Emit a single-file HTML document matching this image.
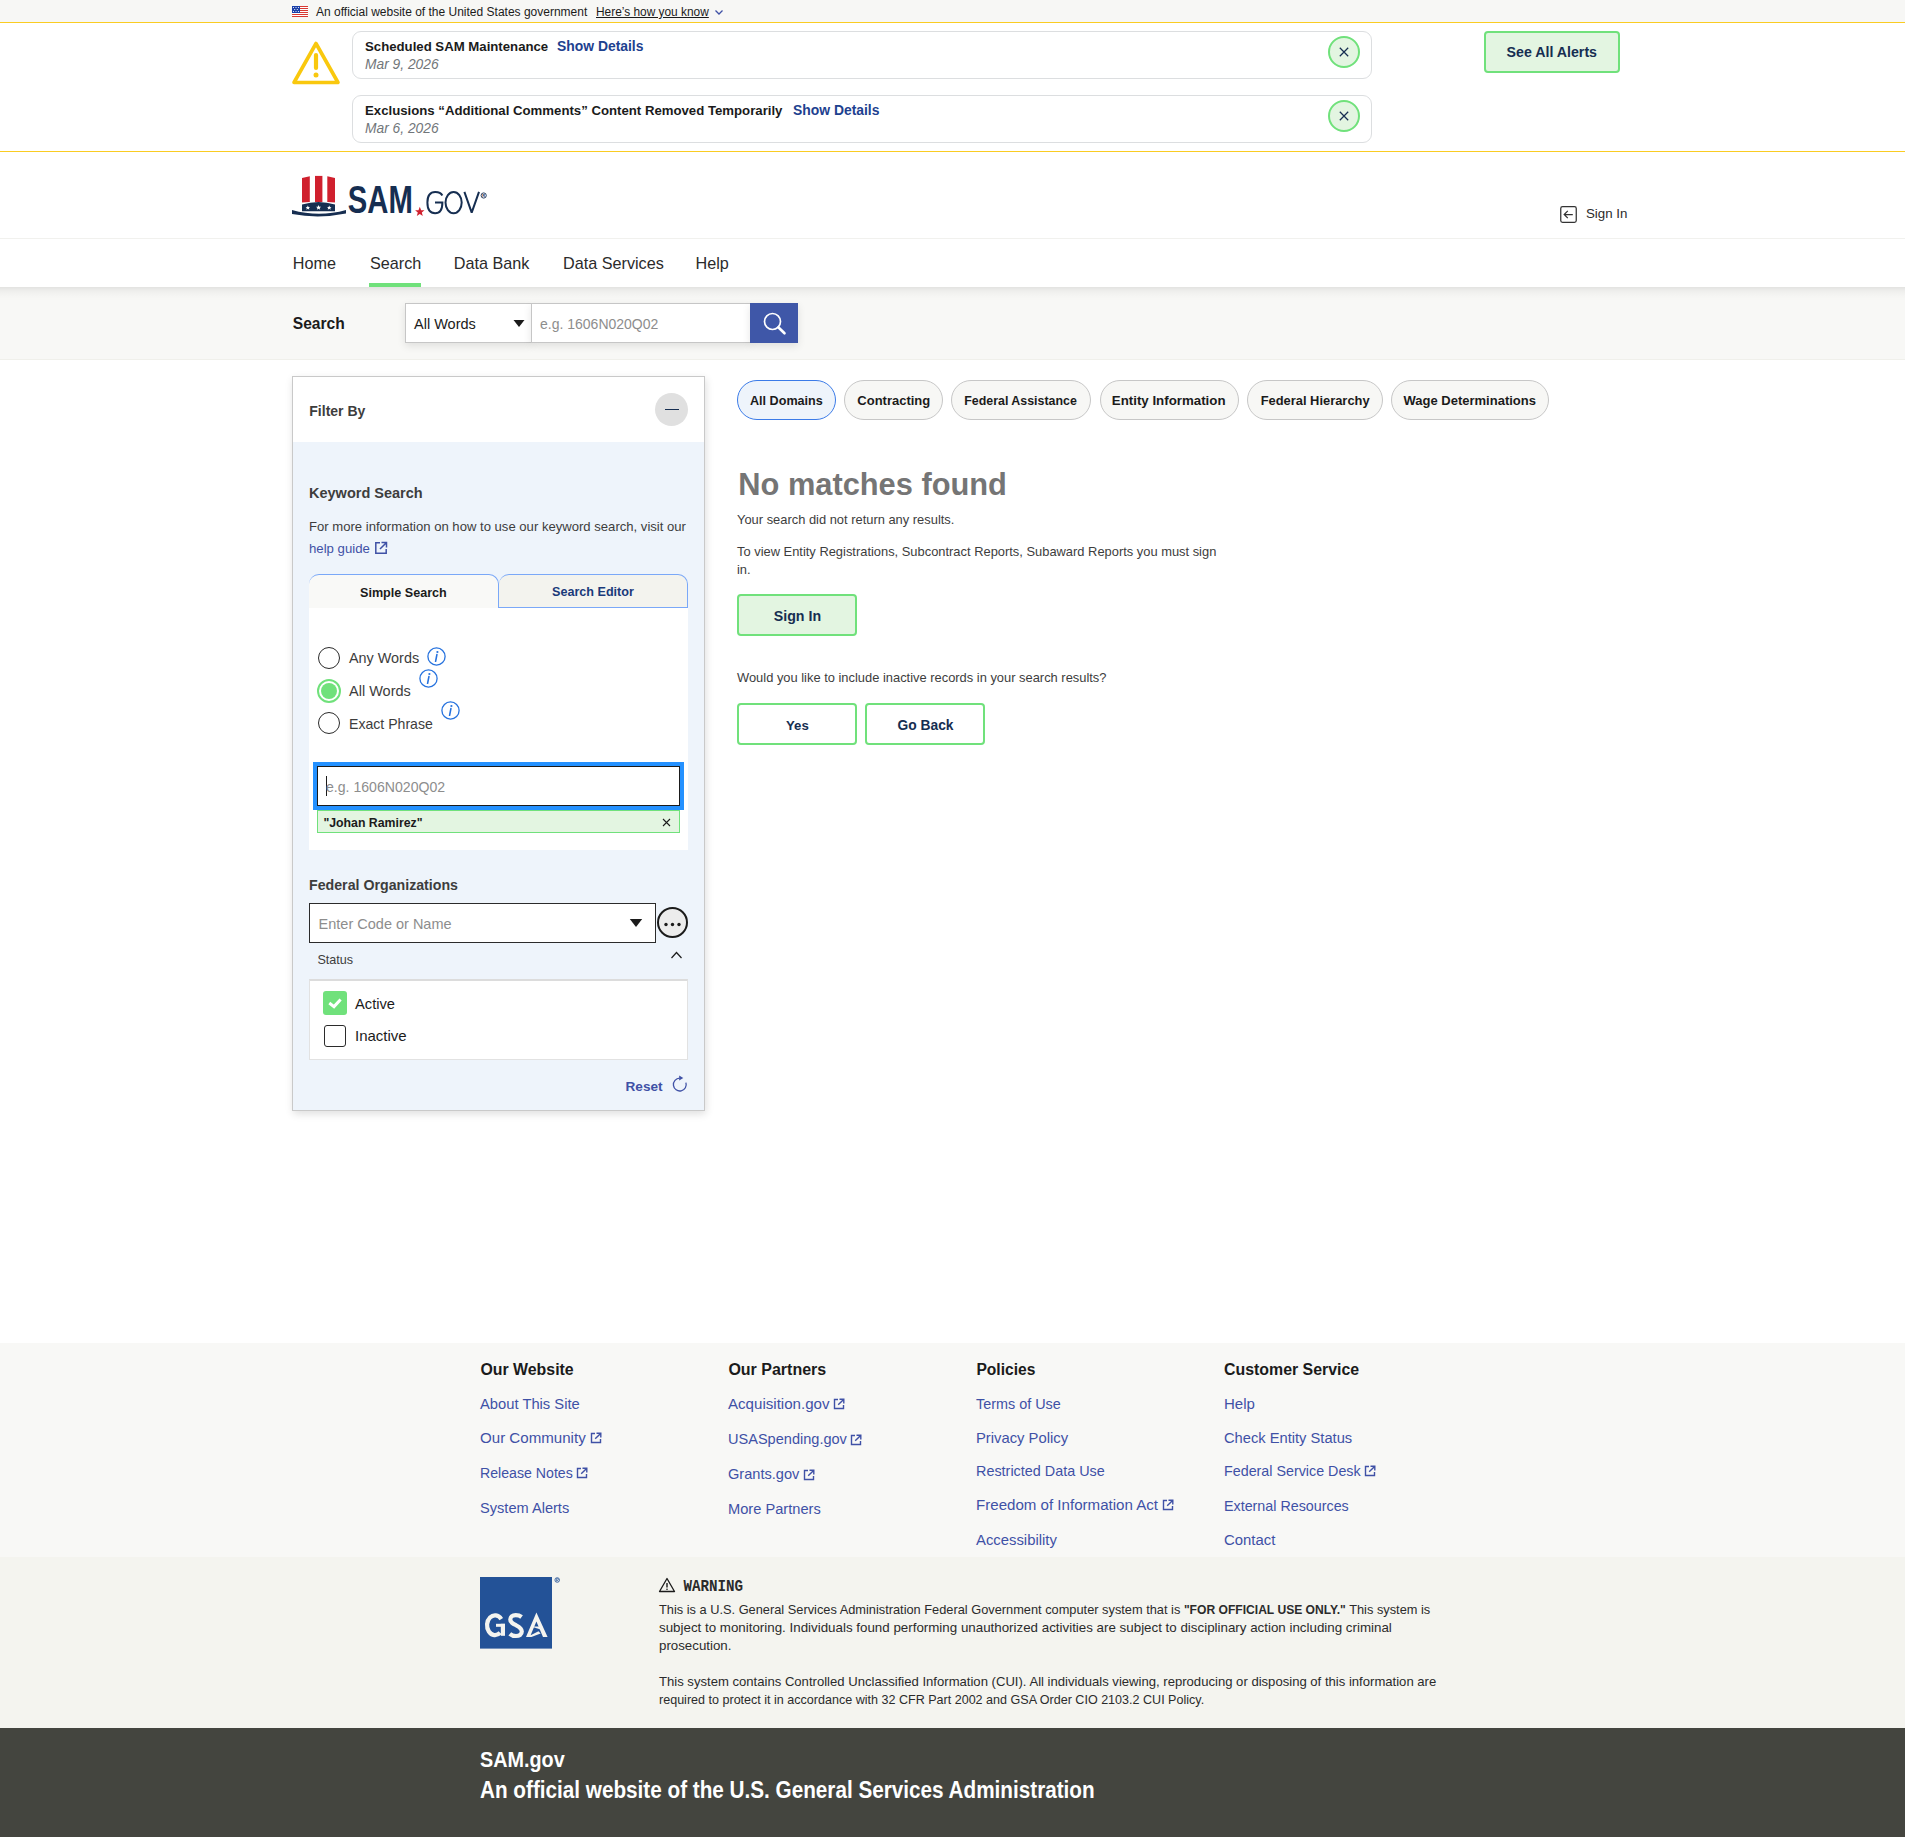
<!DOCTYPE html>
<html><head><meta charset="utf-8"><title>SAM.gov</title>
<style>
html,body{margin:0;padding:0;width:1905px;height:1837px;overflow:hidden;background:#fff;position:relative}
body{font-family:"Liberation Sans",sans-serif}
.t{position:absolute;white-space:nowrap;line-height:1}
.bm{display:inline-block;width:0;height:0}
.r{position:absolute}
b{font-weight:bold}
</style></head><body>
<div class="r" style="left:0px;top:0px;width:1905px;height:22px;background:#f7f7f5"></div>
<div class="r" style="left:0px;top:22px;width:1905px;height:1px;background:#facc22"></div>
<div class="r" style="left:0px;top:23px;width:1905px;height:128px;background:#fff"></div>
<div class="r" style="left:0px;top:151px;width:1905px;height:1px;background:#facc22"></div>
<div class="r" style="left:0px;top:238px;width:1905px;height:1px;background:#f1f1ee"></div>
<div class="r" style="left:0px;top:287px;width:1905px;height:73px;background:linear-gradient(to bottom, rgba(0,0,0,0.085) 0px, rgba(0,0,0,0.04) 4px, rgba(0,0,0,0.012) 9px, rgba(0,0,0,0) 14px), #f8f8f6;border-bottom:1px solid #f0f0eb;box-sizing:border-box"></div>
<svg class="r" style="left:292px;top:6px" width="16" height="11" viewBox="0 0 16 11">
<rect width="16" height="11" fill="#fff"/>
<g fill="#d83933"><rect y="0" width="16" height="1"/><rect y="2" width="16" height="1"/><rect y="4" width="16" height="1"/><rect y="6" width="16" height="1"/><rect y="8" width="16" height="1"/><rect y="10" width="16" height="1"/></g>
<rect width="8" height="7" fill="#1a3fa8"/>
<g fill="#fff"><circle cx="1.5" cy="1.5" r=".6"/><circle cx="4" cy="1.5" r=".6"/><circle cx="6.5" cy="1.5" r=".6"/><circle cx="2.7" cy="3.5" r=".6"/><circle cx="5.3" cy="3.5" r=".6"/><circle cx="1.5" cy="5.5" r=".6"/><circle cx="4" cy="5.5" r=".6"/><circle cx="6.5" cy="5.5" r=".6"/></g>
</svg>
<div class="t" style="left:316px;top:6.01px;font-size:12.0px;font-weight:normal;color:#1b1b1b;font-style:normal;">An official website of the United States government<span class="bm"></span></div>
<div class="t" style="left:596px;top:7.00px;font-size:11.9px;font-weight:normal;color:#1b1b1b;font-style:normal;text-decoration:underline;text-underline-offset:1px">Here’s how you know<span class="bm"></span></div>
<svg class="r" style="left:714px;top:8px" width="10" height="8" viewBox="0 0 10 8"><path d="M1.5 2.5 L5 6 L8.5 2.5" fill="none" stroke="#3f51a6" stroke-width="1.3"/></svg>
<svg class="r" style="left:291px;top:40px" width="50" height="46" viewBox="0 0 50 46">
<path d="M25 3.5 L47 42.5 L3 42.5 Z" fill="none" stroke="#f9c80e" stroke-width="3.6" stroke-linejoin="round"/>
<path d="M25 15 L25 28" stroke="#f9c80e" stroke-width="4.2" stroke-linecap="round"/>
<circle cx="25" cy="35" r="2.5" fill="#f9c80e"/>
</svg>
<div class="r" style="left:352px;top:31px;width:1020px;height:48px;border:1px solid #dcdee0;border-radius:9px;box-sizing:border-box;background:#fff"></div>
<div class="t" style="left:365px;top:40.00px;font-size:13.2px;font-weight:bold;color:#1b1b1b;font-style:normal;">Scheduled SAM Maintenance<span class="bm"></span></div>
<div class="t" style="left:557px;top:40.01px;font-size:13.9px;font-weight:bold;color:#1d418f;font-style:normal;">Show Details<span class="bm"></span></div>
<div class="t" style="left:365px;top:58.01px;font-size:13.8px;font-weight:normal;color:#71767a;font-style:italic;">Mar 9, 2026<span class="bm"></span></div>
<div class="r" style="left:1328px;top:36px;width:32px;height:32px;border:2px solid #70e17b;border-radius:50%;box-sizing:border-box;background:#e3f5e1"></div>
<svg class="r" style="left:1338px;top:46px" width="12" height="12" viewBox="0 0 12 12"><path d="M1.8 1.8 L10.2 10.2 M10.2 1.8 L1.8 10.2" stroke="#162e51" stroke-width="1.25"/></svg>
<div class="r" style="left:352px;top:95px;width:1020px;height:48px;border:1px solid #dcdee0;border-radius:9px;box-sizing:border-box;background:#fff"></div>
<div class="t" style="left:365px;top:104.00px;font-size:13.2px;font-weight:bold;color:#1b1b1b;font-style:normal;">Exclusions “Additional Comments” Content Removed Temporarily<span class="bm"></span></div>
<div class="t" style="left:793px;top:104.01px;font-size:13.9px;font-weight:bold;color:#1d418f;font-style:normal;">Show Details<span class="bm"></span></div>
<div class="t" style="left:365px;top:122.01px;font-size:13.8px;font-weight:normal;color:#71767a;font-style:italic;">Mar 6, 2026<span class="bm"></span></div>
<div class="r" style="left:1328px;top:100px;width:32px;height:32px;border:2px solid #70e17b;border-radius:50%;box-sizing:border-box;background:#e3f5e1"></div>
<svg class="r" style="left:1338px;top:110px" width="12" height="12" viewBox="0 0 12 12"><path d="M1.8 1.8 L10.2 10.2 M10.2 1.8 L1.8 10.2" stroke="#162e51" stroke-width="1.25"/></svg>
<div class="r" style="left:1484px;top:31px;width:136px;height:42px;border:2px solid #70e17b;border-radius:4px;box-sizing:border-box;background:#e3f5e1"></div>
<div class="t" style="left:1506.6px;top:45.01px;font-size:14.2px;font-weight:bold;color:#162e51;font-style:normal;">See All Alerts<span class="bm"></span></div>
<svg class="r" style="left:292px;top:175px" width="196" height="42" viewBox="0 0 196 42">
<g fill="#d0202e">
<path d="M10 3 L17.8 1.2 L17.8 27 L10 27.5 Z"/>
<path d="M23 0.9 L30.4 0.9 L30.4 27 L23 27 Z"/>
<path d="M35.3 1.2 L43 3 L43 27.5 L35.3 27 Z"/>
</g>
<path d="M10 29.5 Q26.5 24.5 43 29.5 L43 36.3 L10 36.3 Z" fill="#162e51"/>
<g fill="#fff"><path d="M15.8 32.5 l.7 1.5 1.6.1-1.2 1 .4 1.6-1.5-.9-1.4.9.4-1.6-1.2-1 1.6-.1z" transform="translate(0,-2)"/><path d="M26.5 31.5 l.8 1.7 1.8.1-1.4 1.1.5 1.8-1.7-1-1.6 1 .5-1.8-1.4-1.1 1.8-.1z" transform="translate(0,-1.5)"/><path d="M37.2 32.5 l.7 1.5 1.6.1-1.2 1 .4 1.6-1.5-.9-1.4.9.4-1.6-1.2-1 1.6-.1z" transform="translate(0,-2)"/></g>
<path d="M0 35 Q27 42.5 54 35 L54 38.5 Q27 44 0 39 Z" fill="#162e51"/>
</svg>
<svg class="r" style="left:290px;top:170px" width="200" height="50" viewBox="0 0 200 50">
<text x="57.8" y="43" font-family="Liberation Sans" font-weight="bold" font-size="39" fill="#162e51" textLength="65" lengthAdjust="spacingAndGlyphs">SAM</text>
<path d="M129.8 36.7 L131.1 40.2 L134.5 40.3 L131.8 42.5 L132.8 45.9 L129.8 43.9 L126.8 45.9 L127.8 42.5 L125.1 40.3 L128.5 40.2 Z" fill="#d0202e"/>
<g fill="none" stroke="#162e51" stroke-width="2">
<path d="M152.3 25.5 C151.2 23 149 21.9 145.2 21.9 C139.5 21.9 137.4 26.8 137.4 32.6 C137.4 38.6 139.6 43.2 145.1 43.2 C150.4 43.2 152.4 39.4 152.4 32.4 L145 32.4"/>
<ellipse cx="163.6" cy="32.6" rx="8.1" ry="10.6"/>
<path d="M174.4 21.8 L181.7 42.6 L189 21.8" stroke-linejoin="bevel"/>
</g>
<circle cx="193.7" cy="25.5" r="2.6" fill="none" stroke="#162e51" stroke-width="0.9"/>
<text x="192.2" y="27" font-family="Liberation Sans" font-weight="bold" font-size="4" fill="#162e51">R</text>
</svg>
<svg class="r" style="left:1559px;top:205px" width="20" height="20" viewBox="0 0 20 20"><rect x="1.75" y="1.65" width="15.5" height="15.6" rx="1.8" fill="none" stroke="#333" stroke-width="1.25"/><path d="M13.8 9.5 H5.4 M8.8 5.9 L5.2 9.5 L8.8 13.1" fill="none" stroke="#333" stroke-width="1.25"/></svg>
<div class="t" style="left:1586px;top:207.01px;font-size:13.3px;font-weight:normal;color:#2b2b2b;font-style:normal;">Sign In<span class="bm"></span></div>
<div class="t" style="left:292.8px;top:255.01px;font-size:16.2px;font-weight:normal;color:#2b2b2b;font-style:normal;">Home<span class="bm"></span></div>
<div class="t" style="left:370px;top:255.01px;font-size:16.2px;font-weight:normal;color:#2b2b2b;font-style:normal;">Search<span class="bm"></span></div>
<div class="t" style="left:453.7px;top:255.01px;font-size:16.2px;font-weight:normal;color:#2b2b2b;font-style:normal;">Data Bank<span class="bm"></span></div>
<div class="t" style="left:563px;top:255.01px;font-size:16.2px;font-weight:normal;color:#2b2b2b;font-style:normal;">Data Services<span class="bm"></span></div>
<div class="t" style="left:695.5px;top:255.01px;font-size:16.2px;font-weight:normal;color:#2b2b2b;font-style:normal;">Help<span class="bm"></span></div>
<div class="r" style="left:369px;top:283px;width:52px;height:4px;background:#70e17b"></div>
<div class="t" style="left:292.8px;top:316.01px;font-size:15.6px;font-weight:bold;color:#1b1b1b;font-style:normal;">Search<span class="bm"></span></div>
<div class="r" style="left:405px;top:303px;width:127px;height:40px;background:#fff;border:1px solid #c6c6c6;box-sizing:border-box;box-shadow:0 3px 8px rgba(0,0,0,0.10)"></div>
<div class="t" style="left:414px;top:317.01px;font-size:14.5px;font-weight:normal;color:#1b1b1b;font-style:normal;">All Words<span class="bm"></span></div>
<svg class="r" style="left:513px;top:319px" width="12" height="9" viewBox="0 0 12 9"><path d="M0.5 1 L11.5 1 L6 8 Z" fill="#1b1b1b"/></svg>
<div class="r" style="left:531px;top:303px;width:220px;height:40px;background:#fff;border:1px solid #c6c6c6;box-sizing:border-box;box-shadow:0 3px 8px rgba(0,0,0,0.10)"></div>
<div class="t" style="left:540px;top:317.01px;font-size:14.0px;font-weight:normal;color:#8d8d8d;font-style:normal;">e.g. 1606N020Q02<span class="bm"></span></div>
<div class="r" style="left:750px;top:303px;width:48px;height:40px;background:#3f57a8;box-shadow:0 3px 8px rgba(0,0,0,0.10)"></div>
<svg class="r" style="left:762px;top:311px" width="26" height="26" viewBox="0 0 26 26"><circle cx="10.5" cy="10.5" r="8" fill="none" stroke="#fff" stroke-width="1.7"/><path d="M16.3 16.3 L22.5 22.3" stroke="#fff" stroke-width="2.6" stroke-linecap="round"/></svg>
<div class="r" style="left:292px;top:376px;width:413px;height:735px;background:#eef4fb;border:1px solid #c9c9c9;box-sizing:border-box;box-shadow:1px 3px 8px rgba(0,0,0,0.13)"></div>
<div class="r" style="left:293px;top:377px;width:411px;height:65px;background:#fff"></div>
<div class="t" style="left:309.3px;top:404.01px;font-size:14.0px;font-weight:bold;color:#3d3d3d;font-style:normal;">Filter By<span class="bm"></span></div>
<div class="r" style="left:655px;top:393px;width:33px;height:33px;background:#e0e0e0;border-radius:50%"></div>
<div class="r" style="left:665px;top:409px;width:14px;height:1px;background:#162e51"></div>
<div class="t" style="left:309px;top:486.01px;font-size:14.5px;font-weight:bold;color:#3d3d3d;font-style:normal;">Keyword Search<span class="bm"></span></div>
<div class="t" style="left:309px;top:520.00px;font-size:13.1px;font-weight:normal;color:#3d3d3d;font-style:normal;">For more information on how to use our keyword search, visit our<span class="bm"></span></div>
<div class="t" style="left:309px;top:542.00px;font-size:13.2px;font-weight:normal;color:#3f51a6;font-style:normal;">help guide<span class="bm"></span></div>
<svg class="r" style="left:374px;top:541px" width="14" height="14" viewBox="0 0 14 14"><path d="M6 1.8 H1.8 V12.2 H12.2 V8" fill="none" stroke="#3f51a6" stroke-width="1.5"/><path d="M7.5 1.5 H12.5 V6.5 M12.3 1.7 L6 8" fill="none" stroke="#3f51a6" stroke-width="1.5"/></svg>
<div class="r" style="left:309px;top:574px;width:190px;height:34px;background:#f9f9f7;border-top:1px solid #7aa8f8;border-right:1px solid #7aa8f8;border-radius:10px 10px 0 0;box-sizing:border-box"></div>
<div class="r" style="left:499px;top:574px;width:189px;height:34px;background:#f3f3ee;border-top:1px solid #7aa8f8;border-right:1px solid #7aa8f8;border-bottom:1px solid #7aa8f8;border-radius:10px 10px 0 0;box-sizing:border-box"></div>
<div class="t" style="left:360px;top:587.01px;font-size:12.6px;font-weight:bold;color:#1b1b1b;font-style:normal;">Simple Search<span class="bm"></span></div>
<div class="t" style="left:552px;top:586.01px;font-size:12.6px;font-weight:bold;color:#1a3a7a;font-style:normal;">Search Editor<span class="bm"></span></div>
<div class="r" style="left:309px;top:608px;width:379px;height:242px;background:#fff"></div>
<div class="r" style="left:318px;top:647px;width:22px;height:22px;border:1.3px solid #2b2b2b;border-radius:50%;box-sizing:border-box;background:#fff"></div>
<div class="t" style="left:349px;top:651.01px;font-size:14.4px;font-weight:normal;color:#3d3d3d;font-style:normal;">Any Words<span class="bm"></span></div>
<div class="r" style="left:317px;top:679px;width:24px;height:24px;border:2px solid #70e17b;border-radius:50%;box-sizing:border-box;background:#fff"></div>
<div class="r" style="left:321px;top:683px;width:16px;height:16px;background:#70e17b;border-radius:50%"></div>
<div class="t" style="left:349px;top:684.01px;font-size:14.5px;font-weight:normal;color:#3d3d3d;font-style:normal;">All Words<span class="bm"></span></div>
<div class="r" style="left:318px;top:712px;width:22px;height:22px;border:1.3px solid #2b2b2b;border-radius:50%;box-sizing:border-box;background:#fff"></div>
<div class="t" style="left:349px;top:717.00px;font-size:14.1px;font-weight:normal;color:#3d3d3d;font-style:normal;">Exact Phrase<span class="bm"></span></div>
<svg class="r" style="left:426.5px;top:646.5px" width="19" height="19" viewBox="0 0 19 19"><circle cx="9.5" cy="9.5" r="8.6" fill="none" stroke="#2672de" stroke-width="1.3"/><circle cx="10.4" cy="5" r="1.1" fill="#2672de"/><path d="M9.9 7.6 L8.6 14.3" stroke="#2672de" stroke-width="1.6" stroke-linecap="round"/></svg>
<svg class="r" style="left:418.5px;top:668.5px" width="19" height="19" viewBox="0 0 19 19"><circle cx="9.5" cy="9.5" r="8.6" fill="none" stroke="#2672de" stroke-width="1.3"/><circle cx="10.4" cy="5" r="1.1" fill="#2672de"/><path d="M9.9 7.6 L8.6 14.3" stroke="#2672de" stroke-width="1.6" stroke-linecap="round"/></svg>
<svg class="r" style="left:440.5px;top:701px" width="19" height="19" viewBox="0 0 19 19"><circle cx="9.5" cy="9.5" r="8.6" fill="none" stroke="#2672de" stroke-width="1.3"/><circle cx="10.4" cy="5" r="1.1" fill="#2672de"/><path d="M9.9 7.6 L8.6 14.3" stroke="#2672de" stroke-width="1.6" stroke-linecap="round"/></svg>
<div class="r" style="left:313px;top:762px;width:371px;height:48px;border:4px solid #2491ff;box-sizing:border-box"></div>
<div class="r" style="left:317px;top:766px;width:363px;height:40px;border:1px solid #1b1b1b;box-sizing:border-box;background:#fff"></div>
<div class="r" style="left:326px;top:776px;width:1.2px;height:20px;background:#1b1b1b"></div>
<div class="t" style="left:326px;top:780.00px;font-size:14.1px;font-weight:normal;color:#8d8d8d;font-style:normal;">e.g. 1606N020Q02<span class="bm"></span></div>
<div class="r" style="left:317px;top:810px;width:363px;height:23px;background:#e3f5e1;border:1px solid #70e17b;box-sizing:border-box"></div>
<div class="t" style="left:323.4px;top:817.01px;font-size:12.3px;font-weight:bold;color:#1b1b1b;font-style:normal;">"Johan Ramirez"<span class="bm"></span></div>
<svg class="r" style="left:662px;top:818px" width="9" height="9" viewBox="0 0 9 9"><path d="M1 1 L8 8 M8 1 L1 8" stroke="#1b1b1b" stroke-width="1.1"/></svg>
<div class="t" style="left:309px;top:878.01px;font-size:14.2px;font-weight:bold;color:#3d3d3d;font-style:normal;">Federal Organizations<span class="bm"></span></div>
<div class="r" style="left:309px;top:903px;width:347px;height:40px;background:#fff;border:1.5px solid #2b2b2b;box-sizing:border-box"></div>
<div class="t" style="left:318.6px;top:917.01px;font-size:14.5px;font-weight:normal;color:#8d8d8d;font-style:normal;">Enter Code or Name<span class="bm"></span></div>
<svg class="r" style="left:629px;top:918px" width="14" height="10" viewBox="0 0 14 10"><path d="M0.8 1 L13.2 1 L7 9 Z" fill="#1b1b1b"/></svg>
<div class="r" style="left:657px;top:907px;width:31px;height:31px;background:#ececec;border:2px solid #1b1b1b;border-radius:50%;box-sizing:border-box"></div>
<svg class="r" style="left:662px;top:921px" width="21" height="7" viewBox="0 0 21 7"><circle cx="4" cy="3.5" r="1.7" fill="#1b1b1b"/><circle cx="10.5" cy="3.5" r="1.7" fill="#1b1b1b"/><circle cx="17" cy="3.5" r="1.7" fill="#1b1b1b"/></svg>
<div class="t" style="left:317.4px;top:954.01px;font-size:12.6px;font-weight:normal;color:#3d3d3d;font-style:normal;">Status<span class="bm"></span></div>
<svg class="r" style="left:670px;top:950px" width="13" height="10" viewBox="0 0 13 10"><path d="M1.5 8 L6.5 2.5 L11.5 8" fill="none" stroke="#1b1b1b" stroke-width="1.2"/></svg>
<div class="r" style="left:309px;top:979px;width:379px;height:81px;background:#fff;border:1px solid #e2e2e2;border-top:2px solid #dcdcdc;box-sizing:border-box"></div>
<div class="r" style="left:323px;top:991px;width:24px;height:24px;background:#70e17b;border-radius:3px"></div>
<svg class="r" style="left:323px;top:991px" width="24" height="24" viewBox="0 0 24 24"><path d="M6.3 12 L11 15.6 L17.6 8.4" fill="none" stroke="#fff" stroke-width="3"/></svg>
<div class="t" style="left:355px;top:997.01px;font-size:14.7px;font-weight:normal;color:#1b1b1b;font-style:normal;">Active<span class="bm"></span></div>
<div class="r" style="left:324px;top:1025px;width:22px;height:22px;border:1.5px solid #2b2b2b;border-radius:3px;box-sizing:border-box;background:#fff"></div>
<div class="t" style="left:355px;top:1028.01px;font-size:15.0px;font-weight:normal;color:#1b1b1b;font-style:normal;">Inactive<span class="bm"></span></div>
<div class="t" style="left:625.5px;top:1080.00px;font-size:13.6px;font-weight:bold;color:#3f51a6;font-style:normal;">Reset<span class="bm"></span></div>
<svg class="r" style="left:671px;top:1074px" width="18" height="19" viewBox="0 0 18 19"><path d="M8.7 4.2 A6.4 6.4 0 1 0 14.9 8.6" fill="none" stroke="#3f51a6" stroke-width="1.3"/><path d="M8.2 1.6 L12.3 4.1 L8.2 6.6 Z" fill="#3f51a6"/></svg>
<div class="r" style="left:737px;top:380px;width:99px;height:40px;background:#eef4fb;border:1.2px solid #3b7be8;border-radius:20px;box-sizing:border-box"></div>
<div class="t" style="left:750px;top:395.01px;font-size:12.6px;font-weight:bold;color:#1b1b1b;font-style:normal;">All Domains<span class="bm"></span></div>
<div class="r" style="left:844px;top:380px;width:99px;height:40px;background:#f7f7f5;border:1px solid #c7c7c7;border-radius:20px;box-sizing:border-box"></div>
<div class="t" style="left:857.3px;top:394.00px;font-size:13.0px;font-weight:bold;color:#1b1b1b;font-style:normal;">Contracting<span class="bm"></span></div>
<div class="r" style="left:951px;top:380px;width:140px;height:40px;background:#f7f7f5;border:1px solid #c7c7c7;border-radius:20px;box-sizing:border-box"></div>
<div class="t" style="left:964.3px;top:395.00px;font-size:12.4px;font-weight:bold;color:#1b1b1b;font-style:normal;">Federal Assistance<span class="bm"></span></div>
<div class="r" style="left:1099.5px;top:380px;width:139.5px;height:40px;background:#f7f7f5;border:1px solid #c7c7c7;border-radius:20px;box-sizing:border-box"></div>
<div class="t" style="left:1111.8px;top:394.01px;font-size:13.3px;font-weight:bold;color:#1b1b1b;font-style:normal;">Entity Information<span class="bm"></span></div>
<div class="r" style="left:1247.3px;top:380px;width:135.70000000000005px;height:40px;background:#f7f7f5;border:1px solid #c7c7c7;border-radius:20px;box-sizing:border-box"></div>
<div class="t" style="left:1260.7px;top:395.00px;font-size:12.9px;font-weight:bold;color:#1b1b1b;font-style:normal;">Federal Hierarchy<span class="bm"></span></div>
<div class="r" style="left:1391px;top:380px;width:158px;height:40px;background:#f7f7f5;border:1px solid #c7c7c7;border-radius:20px;box-sizing:border-box"></div>
<div class="t" style="left:1403.5px;top:394.00px;font-size:13.0px;font-weight:bold;color:#1b1b1b;font-style:normal;">Wage Determinations<span class="bm"></span></div>
<div class="t" style="left:738.3px;top:470.01px;font-size:30.8px;font-weight:bold;color:#757575;font-style:normal;">No matches found<span class="bm"></span></div>
<div class="t" style="left:737px;top:514.00px;font-size:12.9px;font-weight:normal;color:#3d3d3d;font-style:normal;">Your search did not return any results.<span class="bm"></span></div>
<div class="t" style="left:737px;top:546.00px;font-size:12.9px;font-weight:normal;color:#3d3d3d;font-style:normal;">To view Entity Registrations, Subcontract Reports, Subaward Reports you must sign<span class="bm"></span></div>
<div class="t" style="left:737px;top:564.00px;font-size:12.9px;font-weight:normal;color:#3d3d3d;font-style:normal;">in.<span class="bm"></span></div>
<div class="r" style="left:737px;top:594px;width:120px;height:42px;background:#e3f5e1;border:2px solid #70e17b;border-radius:4px;box-sizing:border-box"></div>
<div class="t" style="left:773.8px;top:609.01px;font-size:14.2px;font-weight:bold;color:#162e51;font-style:normal;">Sign In<span class="bm"></span></div>
<div class="t" style="left:737px;top:672.00px;font-size:12.9px;font-weight:normal;color:#3d3d3d;font-style:normal;">Would you like to include inactive records in your search results?<span class="bm"></span></div>
<div class="r" style="left:737px;top:703px;width:120px;height:42px;background:#fff;border:2px solid #70e17b;border-radius:4px;box-sizing:border-box"></div>
<div class="t" style="left:786px;top:719.00px;font-size:13.2px;font-weight:bold;color:#162e51;font-style:normal;">Yes<span class="bm"></span></div>
<div class="r" style="left:865px;top:703px;width:120px;height:42px;background:#fff;border:2px solid #70e17b;border-radius:4px;box-sizing:border-box"></div>
<div class="t" style="left:897.5px;top:719.01px;font-size:13.8px;font-weight:bold;color:#162e51;font-style:normal;">Go Back<span class="bm"></span></div>
<div class="r" style="left:0px;top:1343px;width:1905px;height:214px;background:#f8f8f6"></div>
<div class="r" style="left:0px;top:1557px;width:1905px;height:171px;background:#f4f4ef"></div>
<div class="r" style="left:0px;top:1728px;width:1905px;height:109px;background:#44453f"></div>
<div class="t" style="left:480.4px;top:1362.01px;font-size:15.9px;font-weight:bold;color:#1b1b1b;font-style:normal;">Our Website<span class="bm"></span></div>
<div class="t" style="left:480px;top:1397.01px;font-size:14.75px;font-weight:normal;color:#3f51a6;font-style:normal;">About This Site<span class="bm"></span></div>
<div class="t" style="left:480px;top:1430.00px;font-size:15.1px;font-weight:normal;color:#3f51a6;font-style:normal;">Our Community<span class="bm"></span></div>
<svg class="r" style="left:589.8px;top:1432.2px" width="12" height="12" viewBox="0 0 12 12"><path d="M5 1.5 H1.5 V10.5 H10.5 V7" fill="none" stroke="#3f51a6" stroke-width="1.4"/><path d="M6.5 1.2 H10.8 V5.5 M10.6 1.4 L5.2 6.8" fill="none" stroke="#3f51a6" stroke-width="1.4"/></svg>
<div class="t" style="left:480px;top:1466.01px;font-size:14.15px;font-weight:normal;color:#3f51a6;font-style:normal;">Release Notes<span class="bm"></span></div>
<svg class="r" style="left:576.2px;top:1467.2px" width="12" height="12" viewBox="0 0 12 12"><path d="M5 1.5 H1.5 V10.5 H10.5 V7" fill="none" stroke="#3f51a6" stroke-width="1.4"/><path d="M6.5 1.2 H10.8 V5.5 M10.6 1.4 L5.2 6.8" fill="none" stroke="#3f51a6" stroke-width="1.4"/></svg>
<div class="t" style="left:480px;top:1501.00px;font-size:14.6px;font-weight:normal;color:#3f51a6;font-style:normal;">System Alerts<span class="bm"></span></div>
<div class="t" style="left:728.4px;top:1362.00px;font-size:16.0px;font-weight:bold;color:#1b1b1b;font-style:normal;">Our Partners<span class="bm"></span></div>
<div class="t" style="left:728px;top:1396.00px;font-size:15.1px;font-weight:normal;color:#3f51a6;font-style:normal;">Acquisition.gov<span class="bm"></span></div>
<svg class="r" style="left:833.2px;top:1398.2px" width="12" height="12" viewBox="0 0 12 12"><path d="M5 1.5 H1.5 V10.5 H10.5 V7" fill="none" stroke="#3f51a6" stroke-width="1.4"/><path d="M6.5 1.2 H10.8 V5.5 M10.6 1.4 L5.2 6.8" fill="none" stroke="#3f51a6" stroke-width="1.4"/></svg>
<div class="t" style="left:728px;top:1432.01px;font-size:14.55px;font-weight:normal;color:#3f51a6;font-style:normal;">USASpending.gov<span class="bm"></span></div>
<svg class="r" style="left:850.2px;top:1434px" width="12" height="12" viewBox="0 0 12 12"><path d="M5 1.5 H1.5 V10.5 H10.5 V7" fill="none" stroke="#3f51a6" stroke-width="1.4"/><path d="M6.5 1.2 H10.8 V5.5 M10.6 1.4 L5.2 6.8" fill="none" stroke="#3f51a6" stroke-width="1.4"/></svg>
<div class="t" style="left:728px;top:1467.00px;font-size:14.6px;font-weight:normal;color:#3f51a6;font-style:normal;">Grants.gov<span class="bm"></span></div>
<svg class="r" style="left:803px;top:1469.2px" width="12" height="12" viewBox="0 0 12 12"><path d="M5 1.5 H1.5 V10.5 H10.5 V7" fill="none" stroke="#3f51a6" stroke-width="1.4"/><path d="M6.5 1.2 H10.8 V5.5 M10.6 1.4 L5.2 6.8" fill="none" stroke="#3f51a6" stroke-width="1.4"/></svg>
<div class="t" style="left:728px;top:1502.01px;font-size:14.65px;font-weight:normal;color:#3f51a6;font-style:normal;">More Partners<span class="bm"></span></div>
<div class="t" style="left:976.4px;top:1362.01px;font-size:15.6px;font-weight:bold;color:#1b1b1b;font-style:normal;">Policies<span class="bm"></span></div>
<div class="t" style="left:976px;top:1397.01px;font-size:14.4px;font-weight:normal;color:#3f51a6;font-style:normal;">Terms of Use<span class="bm"></span></div>
<div class="t" style="left:976px;top:1431.00px;font-size:14.8px;font-weight:normal;color:#3f51a6;font-style:normal;">Privacy Policy<span class="bm"></span></div>
<div class="t" style="left:976px;top:1464.01px;font-size:14.4px;font-weight:normal;color:#3f51a6;font-style:normal;">Restricted Data Use<span class="bm"></span></div>
<div class="t" style="left:976px;top:1497.00px;font-size:15.1px;font-weight:normal;color:#3f51a6;font-style:normal;">Freedom of Information Act<span class="bm"></span></div>
<svg class="r" style="left:1162px;top:1499.2px" width="12" height="12" viewBox="0 0 12 12"><path d="M5 1.5 H1.5 V10.5 H10.5 V7" fill="none" stroke="#3f51a6" stroke-width="1.4"/><path d="M6.5 1.2 H10.8 V5.5 M10.6 1.4 L5.2 6.8" fill="none" stroke="#3f51a6" stroke-width="1.4"/></svg>
<div class="t" style="left:976px;top:1533.01px;font-size:14.85px;font-weight:normal;color:#3f51a6;font-style:normal;">Accessibility<span class="bm"></span></div>
<div class="t" style="left:1224px;top:1362.01px;font-size:15.9px;font-weight:bold;color:#1b1b1b;font-style:normal;">Customer Service<span class="bm"></span></div>
<div class="t" style="left:1224px;top:1396.01px;font-size:15.0px;font-weight:normal;color:#3f51a6;font-style:normal;">Help<span class="bm"></span></div>
<div class="t" style="left:1224px;top:1431.01px;font-size:14.7px;font-weight:normal;color:#3f51a6;font-style:normal;">Check Entity Status<span class="bm"></span></div>
<div class="t" style="left:1224px;top:1464.00px;font-size:14.3px;font-weight:normal;color:#3f51a6;font-style:normal;">Federal Service Desk<span class="bm"></span></div>
<svg class="r" style="left:1363.7px;top:1465.2px" width="12" height="12" viewBox="0 0 12 12"><path d="M5 1.5 H1.5 V10.5 H10.5 V7" fill="none" stroke="#3f51a6" stroke-width="1.4"/><path d="M6.5 1.2 H10.8 V5.5 M10.6 1.4 L5.2 6.8" fill="none" stroke="#3f51a6" stroke-width="1.4"/></svg>
<div class="t" style="left:1224px;top:1499.00px;font-size:14.3px;font-weight:normal;color:#3f51a6;font-style:normal;">External Resources<span class="bm"></span></div>
<div class="t" style="left:1224px;top:1533.01px;font-size:14.9px;font-weight:normal;color:#3f51a6;font-style:normal;">Contact<span class="bm"></span></div>
<svg class="r" style="left:480px;top:1577px" width="82" height="73" viewBox="0 0 82 73">
<rect x="0" y="0" width="72" height="71.6" fill="#235297"/>
<g fill="none" stroke="#f4f4ef" stroke-width="4.2">
<path d="M21.26 42.10 A7.95 9.9 0 1 0 20.11 55.78"/>
<path d="M41.6 40 C39.8 38.6 37.6 38.1 35.7 38.1 C32.3 38.1 30.3 40.1 30.3 42.6 C30.3 45.6 33 46.8 36.2 48.3 C39.6 49.9 41.8 51.6 41.8 54.6 C41.8 57.6 39.2 59 36 59 C33.8 59 31.4 58.2 29.8 56.8"/>
</g>
<rect x="20.8" y="46.8" width="4.2" height="12" fill="#f4f4ef"/><rect x="16" y="46.8" width="9" height="3" fill="#f4f4ef"/>
<path d="M56.4 35.5 L67.6 60 L63 60 L56.4 44.5 L50.6 58.2 L58.5 54.2 L60.6 56.5 L51.4 60 L46 60 Z" fill="#f4f4ef"/>
<path d="M51 49.6 L61.7 49.6 L59.9 52.2 Z" fill="#f4f4ef"/>
<circle cx="77.2" cy="3" r="2.3" fill="none" stroke="#235297" stroke-width="0.8"/>
<path d="M76.4 4.5 V1.6 H77.6 A0.8 0.8 0 0 1 77.6 3.2 H76.4 M77.3 3.2 L78.2 4.5" fill="none" stroke="#235297" stroke-width="0.6"/>
</svg>
<svg class="r" style="left:658px;top:1577px" width="18" height="16" viewBox="0 0 18 16"><path d="M9 1.5 L16.5 14.5 L1.5 14.5 Z" fill="none" stroke="#1b1b1b" stroke-width="1.3" stroke-linejoin="round"/><path d="M9 6 V10.5" stroke="#1b1b1b" stroke-width="1.4"/><circle cx="9" cy="12.3" r=".8" fill="#1b1b1b"/></svg>
<div class="t" style="left:683.4px;top:1580.20px;font-size:14.2px;font-weight:bold;color:#2b2b2b;font-style:normal;font-family:'Liberation Mono',monospace;transform:scaleY(1.18);transform-origin:0 85%">WARNING<span class="bm"></span></div>
<div class="t" style="left:659px;top:1604.01px;font-size:12.8px;font-weight:normal;color:#2b2b2b;font-style:normal;">This is a U.S. General Services Administration Federal Government computer system that is <b style="font-size:12.1px">"FOR OFFICIAL USE ONLY."</b> This system is<span class="bm"></span></div>
<div class="t" style="left:659px;top:1621.01px;font-size:13.35px;font-weight:normal;color:#2b2b2b;font-style:normal;">subject to monitoring. Individuals found performing unauthorized activities are subject to disciplinary action including criminal<span class="bm"></span></div>
<div class="t" style="left:659px;top:1639.01px;font-size:13.3px;font-weight:normal;color:#2b2b2b;font-style:normal;">prosecution.<span class="bm"></span></div>
<div class="t" style="left:659px;top:1675.00px;font-size:13.1px;font-weight:normal;color:#2b2b2b;font-style:normal;">This system contains Controlled Unclassified Information (CUI). All individuals viewing, reproducing or disposing of this information are<span class="bm"></span></div>
<div class="t" style="left:659px;top:1694.00px;font-size:12.55px;font-weight:normal;color:#2b2b2b;font-style:normal;">required to protect it in accordance with 32 CFR Part 2002 and GSA Order CIO 2103.2 CUI Policy.<span class="bm"></span></div>
<div class="t" style="left:480.4px;top:1749.00px;font-size:22.5px;font-weight:bold;color:#fff;font-style:normal;transform:scaleX(0.88);transform-origin:0 0">SAM.gov<span class="bm"></span></div>
<div class="t" style="left:480.4px;top:1779.01px;font-size:23px;font-weight:bold;color:#fff;font-style:normal;transform:scaleX(0.9);transform-origin:0 0">An official website of the U.S. General Services Administration<span class="bm"></span></div>
</body></html>
